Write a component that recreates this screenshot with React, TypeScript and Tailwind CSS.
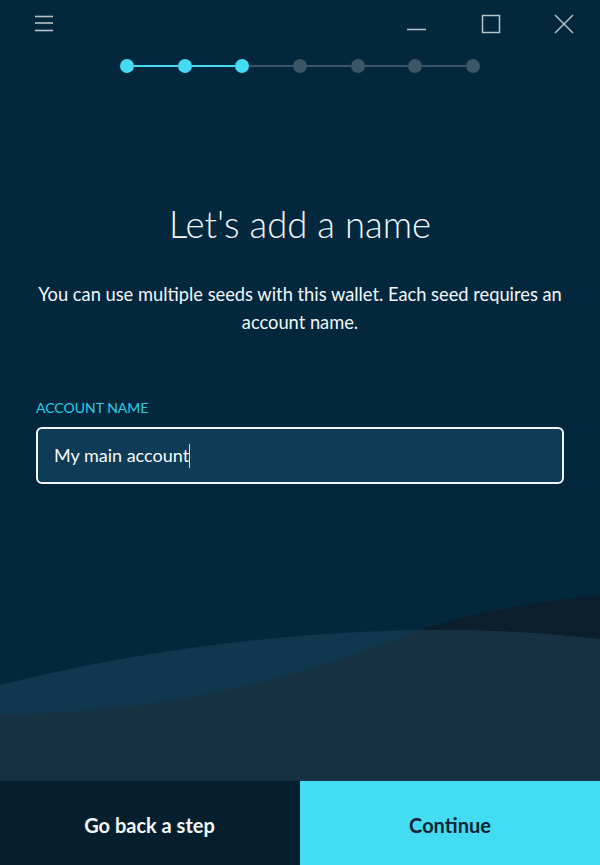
import React from "react";

const steps = 7;
const current = 3;

function Stepper() {
  const items: React.ReactNode[] = [];
  for (let i = 0; i < steps; i++) {
    const done = i < current;
    if (i > 0) {
      items.push(
        <div
          key={`l${i}`}
          className={`flex-1 h-[2px] ${i < current ? "bg-[#44dcf3]" : "bg-[#3b5666]"}`}
        />
      );
    }
    items.push(
      <div
        key={`d${i}`}
        className={`w-3.5 h-3.5 rounded-full shrink-0 ${done ? "bg-[#44dcf3]" : "bg-[#3b5666]"}`}
      />
    );
  }
  return <div className="mx-auto mt-[13px] w-[360px] flex items-center">{items}</div>;
}

function TitleBar() {
  return (
    <div className="h-[46px] flex items-start">
      <svg width="20" height="18" viewBox="0 0 20 18" className="ml-[34px] mt-[14px]">
        <g stroke="#b7c3cb" strokeWidth="1.6">
          <line x1="1" y1="2.5" x2="19" y2="2.5" />
          <line x1="1" y1="9" x2="19" y2="9" />
          <line x1="1" y1="16.5" x2="19" y2="16.5" />
        </g>
      </svg>
      <div className="flex-1" />
      <svg width="20" height="20" viewBox="0 0 20 20" className="mt-[14px]">
        <line x1="0" y1="15.5" x2="19" y2="15.5" stroke="#b7c3cb" strokeWidth="1.5" />
      </svg>
      <svg width="20" height="20" viewBox="0 0 20 20" className="ml-[54px] mt-[14px]">
        <rect x="1.5" y="1.5" width="17" height="17" fill="none" stroke="#b7c3cb" strokeWidth="1.5" />
      </svg>
      <svg width="20" height="20" viewBox="0 0 20 20" className="ml-[53px] mr-[26px] mt-[14px]">
        <g stroke="#b7c3cb" strokeWidth="1.5">
          <line x1="1" y1="1" x2="19" y2="19" />
          <line x1="19" y1="1" x2="1" y2="19" />
        </g>
      </svg>
    </div>
  );
}

function Waves() {
  return (
    <svg width="600" height="186" viewBox="0 0 600 186" className="block shrink-0">
      <path d="M0 119 C 180 119, 320 75, 420 35 C 480 15, 550 5, 600 0 L600 186 L0 186 Z" fill="#0a1f2b" />
      <path d="M0 90 C 120 60, 260 38, 420 35 C 500 34, 560 40, 600 44 L600 186 L0 186 Z" fill="#11374f" />
      <path d="M0 119 C 180 119, 320 75, 420 35 C 500 34, 560 40, 600 44 L600 186 L0 186 Z" fill="#163142" />
    </svg>
  );
}

export default function App() {
  return (
    <div
      className="w-[600px] h-[865px] flex flex-col bg-[#03283e] text-white overflow-hidden"
      style={{ fontFamily: "Lato, 'Open Sans', sans-serif" }}
    >
      <TitleBar />
      <Stepper />

      <h1 className="mt-[129px] text-center text-[36.5px] leading-[44px] font-light text-[#f2f7fa]">
        Let's add a name
      </h1>
      <p className="mt-[34px] px-[30px] text-center text-[18.3px] leading-[28px] text-[#f2f7fa]">
        You can use multiple seeds with this wallet. Each seed requires an account name.
      </p>

      <div className="mt-[62px] mx-[36px]">
        <div className="text-[14px] leading-[20px] uppercase text-[#30cbe6]">Account name</div>
        <div className="mt-[9px] h-[57px] rounded-md border-2 border-[#f2f5f7] bg-[#0e3b55] flex items-center px-[16px]">
          <span className="text-[18px] text-[#f7fafc]">My main account</span>
          <span className="w-px h-[24px] bg-[#d6dde2]" />
        </div>
      </div>

      <div className="flex-1" />
      <Waves />

      <div className="h-[84px] flex shrink-0">
        <button className="w-1/2 pt-[4px] bg-[#061f2e] text-[20px] font-bold text-[#f4f7f9] border-r border-[#0c2736]">
          Go back a step
        </button>
        <button className="w-1/2 pt-[4px] bg-[#44dcf3] text-[20px] font-bold text-[#0b2434]">
          Continue
        </button>
      </div>
    </div>
  );
}
